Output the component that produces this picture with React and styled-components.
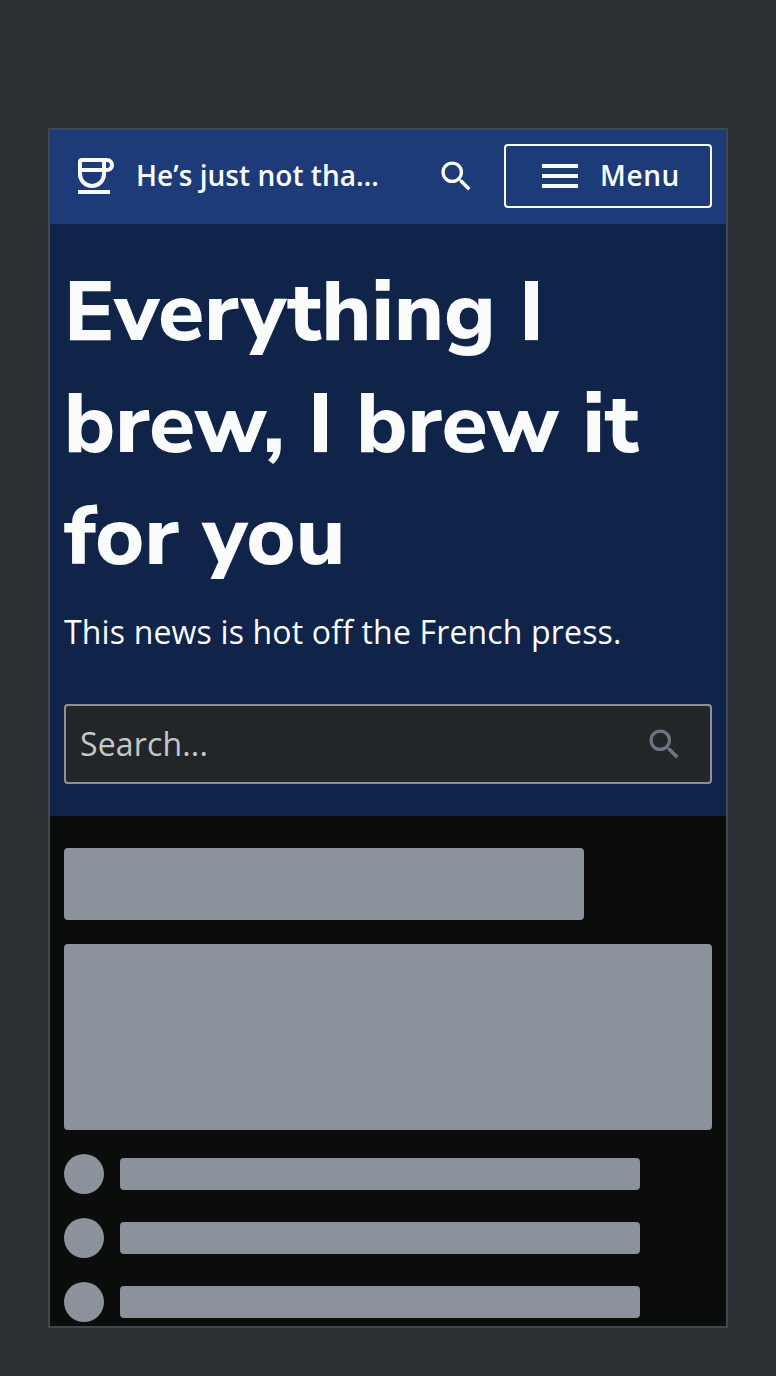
import React from "react";
import styled, { createGlobalStyle } from "styled-components";

const Global = createGlobalStyle`
  * { box-sizing: border-box; }
  html, body { margin: 0; background: #2d3035; }
  body { font-family: "Open Sans", sans-serif; color: #fafcfc; }
`;
const Page = styled.main`
  height: 1376px;
  padding: 128px 48px 48px;
  overflow: hidden;
`;
const Device = styled.div`
  height: 1200px;
  border: 2px solid #43484e;
  background: #0a0d0c;
  overflow: hidden;
`;
const TopBar = styled.header`
  display: flex;
  align-items: center;
  height: 94px;
  padding: 0 14px 2px 24px;
  background: #1c3b78;
`;
const Title = styled.span`
  width: 300px;
  margin-left: 18px;
  padding-bottom: 2px;
  font-size: 28px;
  font-weight: 600;
  line-height: 40px;
  letter-spacing: 0.04px;
  white-space: nowrap;
`;
const SearchIcon = styled.svg`
  width: 40px;
  height: 40px;
  flex: none;
  fill: ${(p) => p.$color};
`;
const MenuButton = styled.button`
  display: flex;
  align-items: center;
  gap: 16px;
  width: 208px;
  height: 64px;
  margin-left: auto;
  padding: 0 0 0 30px;
  border: 2px solid #fafcfc;
  border-radius: 4px;
  background: transparent;
  color: inherit;
  font: 600 28px "Open Sans", sans-serif;
  letter-spacing: 0.6px;
`;
const MenuLabel = styled.span`
  padding-bottom: 2px;
`;
const Hero = styled.section`
  height: 592px;
  padding: 33px 14px 32px;
  background: #102348;
`;
const Heading = styled.h1`
  margin: 0;
  font: 800 84px/112px "Nunito Sans", Nunito, "Open Sans", sans-serif;
`;
const Lead = styled.p`
  margin: 15px 0 48px;
  font-size: 32px;
  line-height: 48px;
  letter-spacing: 0.16px;
`;
const SearchBox = styled.div`
  display: flex;
  align-items: center;
  justify-content: space-between;
  height: 80px;
  padding: 0 26px 0 14px;
  border: 2px solid #8b9199;
  border-radius: 4px;
  background: #222628;
`;
const Placeholder = styled.span`
  padding-bottom: 2px;
  color: #c4c8ca;
  font-size: 32px;
  letter-spacing: 0.16px;
`;
const Content = styled.section`
  display: flex;
  flex-direction: column;
  gap: 24px;
  padding: 32px 14px;
`;
const Block = styled.div`
  width: ${(p) => p.$w}px;
  height: ${(p) => p.$h}px;
  border-radius: 4px;
  background: #8b929b;
`;
const Row = styled.div`
  display: flex;
  align-items: center;
  gap: 16px;
`;
const Dot = styled.div`
  width: 40px;
  height: 40px;
  border-radius: 50%;
  background: #8b929b;
`;

const Magnifier = ({ color }) => (
  <SearchIcon viewBox="-0.25 -0.25 24 24" $color={color}>
    <path d="M15.5 14h-.79l-.28-.27A6.471 6.471 0 0 0 16 9.5 6.5 6.5 0 1 0 9.5 16c1.61 0 3.09-.59 4.23-1.57l.27.28v.79l5 4.99L20.49 19l-4.99-5zm-6 0C7.01 14 5 11.99 5 9.5S7.01 5 9.5 5 14 7.01 14 9.5 11.99 14 9.5 14z" />
  </SearchIcon>
);

export default function App() {
  return (
    <Page>
      <Global />
      <Device>
        <TopBar>
          <svg width="44" height="44" viewBox="0 0 44 44" fill="none" stroke="#fafcfc" strokeWidth="4">
            <path d="M8 6h22v14a12 12 0 0 1-24 0V8a2 2 0 0 1 2-2zM6 16h24M30 6h3a5 5 0 0 1 0 10h-3M4 38h32" />
          </svg>
          <Title>He’s just not tha…</Title>
          <Magnifier color="#fafcfc" />
          <MenuButton>
            <svg width="48" height="48" viewBox="0 0 24 24" fill="#fafcfc">
              <path d="M3 18h18v-2H3v2zm0-5h18v-2H3v2zm0-7v2h18V6H3z" />
            </svg>
            <MenuLabel>Menu</MenuLabel>
          </MenuButton>
        </TopBar>
        <Hero>
          <Heading>Everything I<br />brew, I brew it<br />for you</Heading>
          <Lead>This news is hot off the French press.</Lead>
          <SearchBox>
            <Placeholder>Search...</Placeholder>
            <Magnifier color="#6c7682" />
          </SearchBox>
        </Hero>
        <Content>
          <Block $w={520} $h={72} />
          <Block $w={648} $h={186} />
          {[1, 2, 3].map((n) => (
            <Row key={n}>
              <Dot />
              <Block $w={520} $h={32} />
            </Row>
          ))}
        </Content>
      </Device>
    </Page>
  );
}
